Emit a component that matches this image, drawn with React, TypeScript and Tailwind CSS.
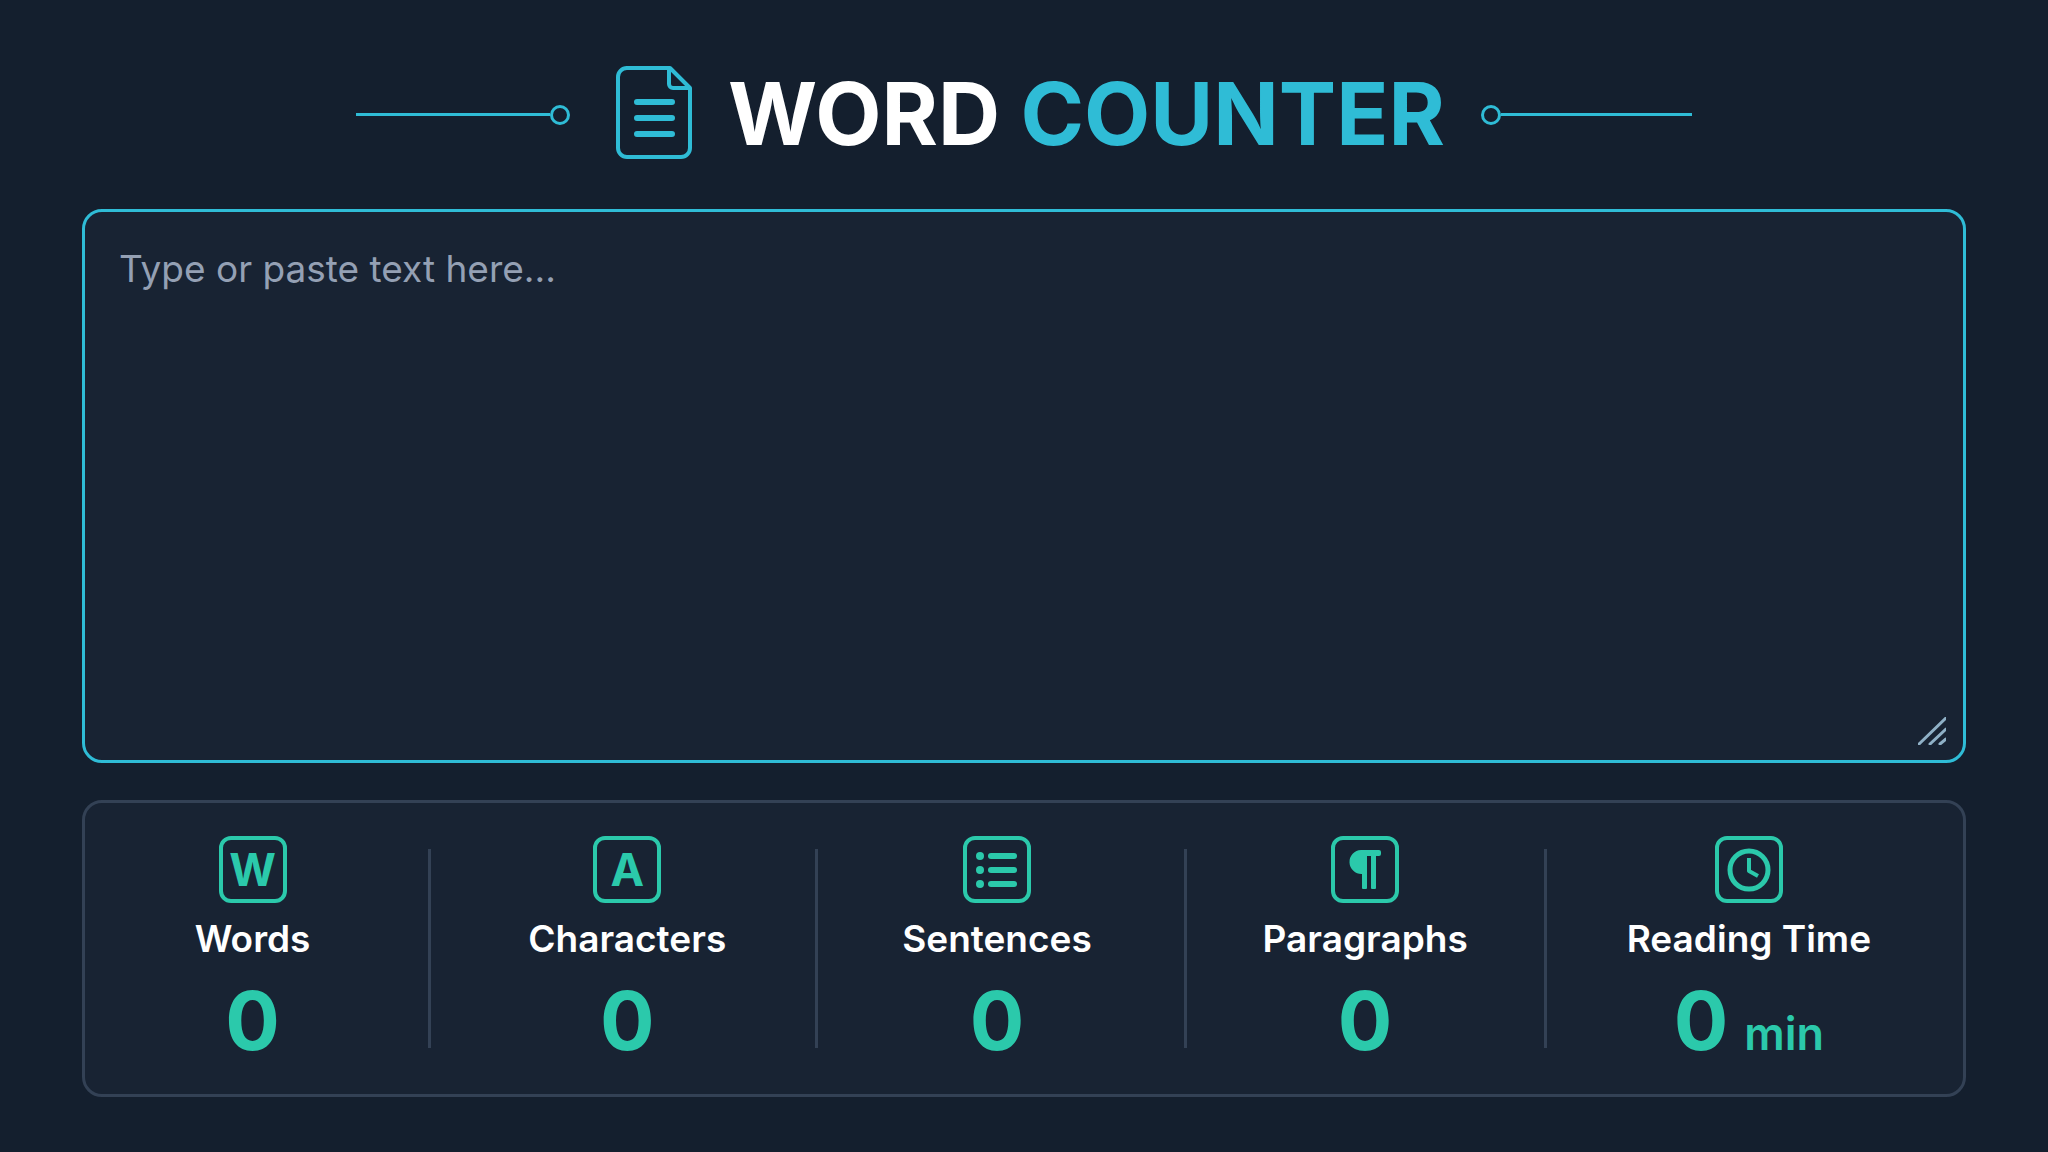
import { useState } from "react";
import type { ReactNode } from "react";

function DocumentIcon() {
  return (
    <svg className="mb-1" width="76" height="93" viewBox="0 0 76 93" fill="none" stroke="currentColor" strokeWidth="4" strokeLinejoin="round" aria-hidden="true">
      <path d="M10 2H54L74 22V82a9 9 0 0 1-9 9H11a9 9 0 0 1-9-9V11a9 9 0 0 1 9-9Z" />
      <path d="M53 3V18a4 4 0 0 0 4 4H73" />
      <path d="M21 36H56M21 52H56M21 68H56" strokeWidth="6" strokeLinecap="round" />
    </svg>
  );
}

function ListIcon() {
  return (
    <svg width="60" height="60" viewBox="0 0 60 60" fill="currentColor" aria-hidden="true">
      <circle cx="13" cy="16" r="4" />
      <circle cx="13" cy="30" r="4" />
      <circle cx="13" cy="44" r="4" />
      <rect x="21" y="13" width="29" height="6" rx="3" />
      <rect x="21" y="27" width="29" height="6" rx="3" />
      <rect x="21" y="41" width="29" height="6" rx="3" />
    </svg>
  );
}

function ParagraphIcon() {
  return (
    <svg width="60" height="60" viewBox="0 0 60 60" fill="currentColor" aria-hidden="true">
      <path d="M26 10H44a2 2 0 0 1 2 2v2a2 2 0 0 1-2 2H41V48a1 1 0 0 1-1 1H37a1 1 0 0 1-1-1V16H32V48a1 1 0 0 1-1 1H28a1 1 0 0 1-1-1V34a12 12 0 0 1-1-24Z" />
    </svg>
  );
}

function ClockIcon() {
  return (
    <svg width="60" height="60" viewBox="0 0 60 60" fill="none" stroke="currentColor" strokeWidth="5" aria-hidden="true">
      <circle cx="30" cy="30" r="19" />
      <path d="M30 18V31L39 36" strokeWidth="4" strokeLinejoin="round" />
    </svg>
  );
}

function Stat({ icon, label, value, unit, className = "" }: { icon: ReactNode; label: string; value: number; unit?: string; className?: string }) {
  return (
    <div className={`flex flex-col items-center ${className}`}>
      <div className="flex h-[67px] w-[68px] items-center justify-center rounded-xl border-4 border-[#2bc9ab] text-[45px] leading-none font-bold text-[#2bc9ab]">
        {icon}
      </div>
      <h2 className="mt-3 text-[37px] leading-[48px] font-semibold text-white">{label}</h2>
      <p className="mt-4 flex items-baseline gap-4 text-[81px] leading-[84px] font-bold text-[#2bc9ab]">
        {value}
        {unit && <span className="text-[45px] leading-none font-semibold">{unit}</span>}
      </p>
    </div>
  );
}

function Divider() {
  return <div className="mt-[13px] h-[199px] w-[3px] bg-[#334155]" />;
}

function App() {
  const [text, setText] = useState("");

  const words = text.trim() ? text.trim().split(/\s+/).length : 0;
  const sentences = text.split(/[.!?]+/).filter((s) => s.trim()).length;
  const paragraphs = text.split(/\n+/).filter((p) => p.trim()).length;
  const minutes = Math.ceil(words / 200);

  return (
    <div className="flex min-h-screen flex-col bg-[#141f2e] px-[82px] pt-[66px] pb-[55px] font-['Inter',sans-serif]">
      <header className="flex items-center justify-center text-[#2fbcd6]">
        <div className="flex items-center">
          <div className="h-[3px] w-[194px] bg-[#2fbcd6]" />
          <div className="size-5 rounded-full border-3 border-[#2fbcd6]" />
        </div>
        <div className="mr-9 ml-[46px] flex items-center gap-9">
          <DocumentIcon />
          <h1 className="text-[86px] leading-[93px] font-bold whitespace-nowrap">
            <span className="text-white">WORD</span> COUNTER
          </h1>
        </div>
        <div className="flex items-center">
          <div className="size-5 rounded-full border-3 border-[#2fbcd6]" />
          <div className="h-[3px] w-[191px] bg-[#2fbcd6]" />
        </div>
      </header>

      <div className="relative mt-[46px] flex flex-1">
        <textarea
          aria-label="Text to count"
          value={text}
          onChange={(e) => setText(e.target.value)}
          placeholder="Type or paste text here..."
          className="w-full resize-none rounded-[20px] border-3 border-[#2fbcd6] bg-[#182333] px-[34px] py-[31px] text-[37px] leading-[52px] text-white outline-none placeholder:text-[#94a0b4]"
        />
        <svg className="pointer-events-none absolute right-5 bottom-[18px]" width="28" height="28" viewBox="0 0 28 28" fill="none" stroke="#8fb0c6" strokeWidth="3" strokeLinecap="round" aria-hidden="true">
          <path d="M1 27L28 1M12 27L28 12M22 27L28 22" />
        </svg>
      </div>

      <section className="mt-[37px] grid grid-cols-[343fr_3px_384fr_3px_365fr_3px_357fr_3px_416fr] rounded-[20px] border-3 border-[#334155] bg-[#182333] pt-[33px] pb-[31px]">
        <Stat icon="W" label="Words" value={words} className="pr-2" />
        <Divider />
        <Stat icon="A" label="Characters" value={text.length} className="pl-2" />
        <Divider />
        <Stat icon={<ListIcon />} label="Sentences" value={sentences} className="pr-2" />
        <Divider />
        <Stat icon={<ParagraphIcon />} label="Paragraphs" value={paragraphs} />
        <Divider />
        <Stat icon={<ClockIcon />} label="Reading Time" value={minutes} unit="min" className="pr-3" />
      </section>
    </div>
  );
}

export default App;
